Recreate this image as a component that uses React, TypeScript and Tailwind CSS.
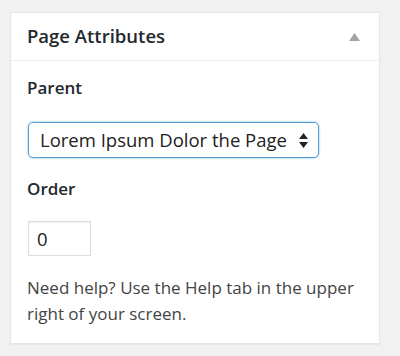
import React from "react";

export default function App() {
  return (
    <div className="w-[400px] h-[356px] bg-[#f1f1f1] pt-[12px] pl-[10px]" style={{ fontFamily: '"Open Sans", sans-serif' }}>
      <div className="w-[370px] h-[332px] bg-white border border-[#e5e5e5] shadow-[0_1px_1px_rgba(0,0,0,0.04)] flex flex-col">
        <div className="h-[48px] border-b border-[#eeeeee] flex items-center justify-between pl-[16px] pr-[19px]">
          <span className="text-[18.5px] font-semibold text-[#23282d] leading-none">Page Attributes</span>
          <svg width="11" height="8" viewBox="0 0 11 8"><path d="M5.5 0 L11 8 L0 8 Z" fill="#a0a5aa" /></svg>
        </div>
        <div className="pl-[16px] pr-[16px] pt-[16px] text-[#32373c]">
          <div className="text-[17px] font-semibold leading-[22px] text-[#23282d]">Parent</div>
          <div className="mt-[23px] w-[291px] h-[36px] ml-[1px] rounded-[5px] border border-[#5b9dd9] shadow-[0_0_2px_rgba(30,140,190,0.8)] flex items-center justify-between pl-[11px] pr-[10px]">
            <span className="text-[18.5px] text-[#222] leading-none">Lorem Ipsum Dolor the Page</span>
            <svg width="9" height="15" viewBox="0 0 9 15"><path d="M4.5 0 L9 6 L0 6 Z M4.5 15 L9 9 L0 9 Z" fill="#222" /></svg>
          </div>
          <div className="mt-[20px] text-[17px] font-semibold leading-[22px] text-[#23282d]">Order</div>
          <div className="mt-[21px] ml-[1px] w-[63px] h-[35px] border border-[#dddddd] shadow-[inset_0_1px_2px_rgba(0,0,0,0.07)] flex items-center pl-[8px] text-[18.5px] text-[#222]">0</div>
          <p className="mt-[19px] text-[17px] leading-[26px] text-[#444]">Need help? Use the Help tab in the upper right of your screen.</p>
        </div>
      </div>
    </div>
  );
}
